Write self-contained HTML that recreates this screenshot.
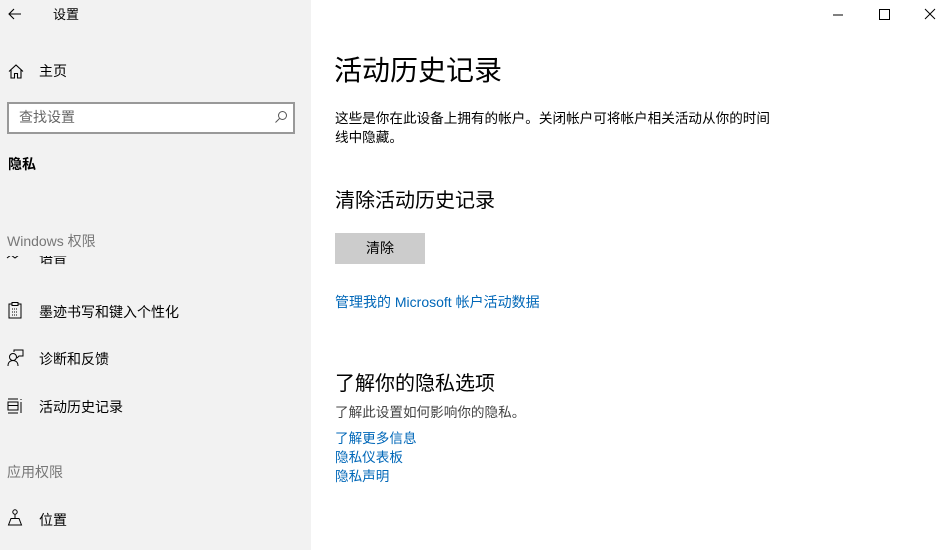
<!DOCTYPE html>
<html><head><meta charset="utf-8"><style>
*{margin:0;padding:0;box-sizing:border-box}
body{width:944px;height:550px;overflow:hidden;background:#fff;font-family:"Liberation Sans","Noto Sans CJK SC",sans-serif;color:#000;position:relative}
.side{position:absolute;left:0;top:0;width:311px;height:550px;background:#f2f2f2}
.a{position:absolute;white-space:nowrap;line-height:1}
.link{color:#0067b8;font-size:13.6px}
</style></head><body>
<div class="side">
<svg class="a" style="left:8px;top:8px" width="14" height="12" viewBox="0 0 14 12"><path d="M13 6H1M6 1L1 6l5 5" fill="none" stroke="#000" stroke-width="1.1"/></svg>
<div class="a" style="left:53px;top:8px;font-size:13px">设置</div>
<svg class="a" style="left:8px;top:64px" width="16" height="15" viewBox="0 0 16 15"><path d="M1 7.5L8 1l7 6.5M3 6v8h3.5V9.5h3V14H13V6" fill="none" stroke="#000" stroke-width="1.1"/></svg>
<div class="a" style="left:39px;top:64px;font-size:14px">主页</div>
<div class="a" style="left:7px;top:102px;width:288px;height:32px;border:2px solid #999;background:#fff"></div>
<div class="a" style="left:19px;top:110px;font-size:14px;color:#666">查找设置</div>
<svg class="a" style="left:274px;top:110px" width="14" height="14" viewBox="0 0 14 14"><circle cx="8.5" cy="5.5" r="4" fill="none" stroke="#555"/><path d="M5.5 8.5L1.5 12.5" stroke="#555"/></svg>
<div class="a" style="left:8px;top:157px;font-size:14px;font-weight:bold">隐私</div>
<div class="a" style="left:7px;top:234px;font-size:14px;color:#777">Windows 权限</div>
<div class="a" style="left:0;top:256px;width:311px;height:14px;overflow:hidden"><div class="a" style="left:39px;top:-5px;font-size:14px">语音</div><svg class="a" style="left:6px;top:-4px" width="16" height="12"><path d="M1 6l4-3 4 3 4-3" fill="none" stroke="#000"/></svg></div>
<svg class="a" style="left:8px;top:302px" width="14" height="17" viewBox="0 0 14 17"><rect x="1" y="2" width="12" height="14" fill="none" stroke="#000"/><rect x="4" y=".5" width="6" height="3" fill="#f2f2f2" stroke="#000"/><path d="M4 7h6M4 10h6M4 13h6" stroke="#000" stroke-dasharray="1 1"/></svg>
<div class="a" style="left:39px;top:305px;font-size:14px">墨迹书写和键入个性化</div>
<svg class="a" style="left:7px;top:349px" width="17" height="18" viewBox="0 0 17 18"><circle cx="6" cy="8" r="3.5" fill="none" stroke="#000"/><path d="M1 17c0-4 2.5-5.5 5-5.5s5 1.5 5 5.5M7 3V1h9v6h-4l-2 2" fill="none" stroke="#000"/></svg>
<div class="a" style="left:39px;top:352px;font-size:14px">诊断和反馈</div>
<svg class="a" style="left:7px;top:398px" width="16" height="16" viewBox="0 0 16 16"><path d="M1 1h10M1 15h10M1 4h10v8H1zM1 7.5h10M14 1v1M14 4v11" fill="none" stroke="#000"/></svg>
<div class="a" style="left:39px;top:400px;font-size:14px">活动历史记录</div>
<div class="a" style="left:7px;top:465px;font-size:14px;color:#777">应用权限</div>
<svg class="a" style="left:7px;top:509px" width="16" height="17" viewBox="0 0 16 17"><circle cx="8" cy="3" r="2.2" fill="none" stroke="#000"/><path d="M8 5.5v4M4 9.5h8l2.5 6.5h-13z" fill="none" stroke="#000"/></svg>
<div class="a" style="left:39px;top:513px;font-size:14px">位置</div>
</div>
<svg class="a" style="left:832px;top:8px" width="104" height="14"><path d="M1 7h10" stroke="#000"/><rect x="47.5" y="1.5" width="10" height="10" fill="none" stroke="#000"/><path d="M93 1l10 10M103 1L93 11" stroke="#000"/></svg>
<div class="a" style="left:334px;top:57px;font-size:28px">活动历史记录</div>
<div class="a" style="left:335px;top:109px;font-size:13.6px;line-height:19px;white-space:normal;width:470px">这些是你在此设备上拥有的帐户。关闭帐户可将帐户相关活动从你的时间<br>线中隐藏。</div>
<div class="a" style="left:335px;top:191px;font-size:20px">清除活动历史记录</div>
<div class="a" style="left:335px;top:233px;width:90px;height:31px;background:#ccc;font-size:14px;text-align:center;line-height:31px">清除</div>
<div class="a link" style="left:335px;top:295px;font-size:14px">管理我的 Microsoft 帐户活动数据</div>
<div class="a" style="left:335px;top:374px;font-size:20px">了解你的隐私选项</div>
<div class="a" style="left:335px;top:406px;font-size:13.6px;color:#444">了解此设置如何影响你的隐私。</div>
<div class="a link" style="left:335px;top:432px">了解更多信息</div>
<div class="a link" style="left:335px;top:451px">隐私仪表板</div>
<div class="a link" style="left:335px;top:470px">隐私声明</div>
</body></html>
